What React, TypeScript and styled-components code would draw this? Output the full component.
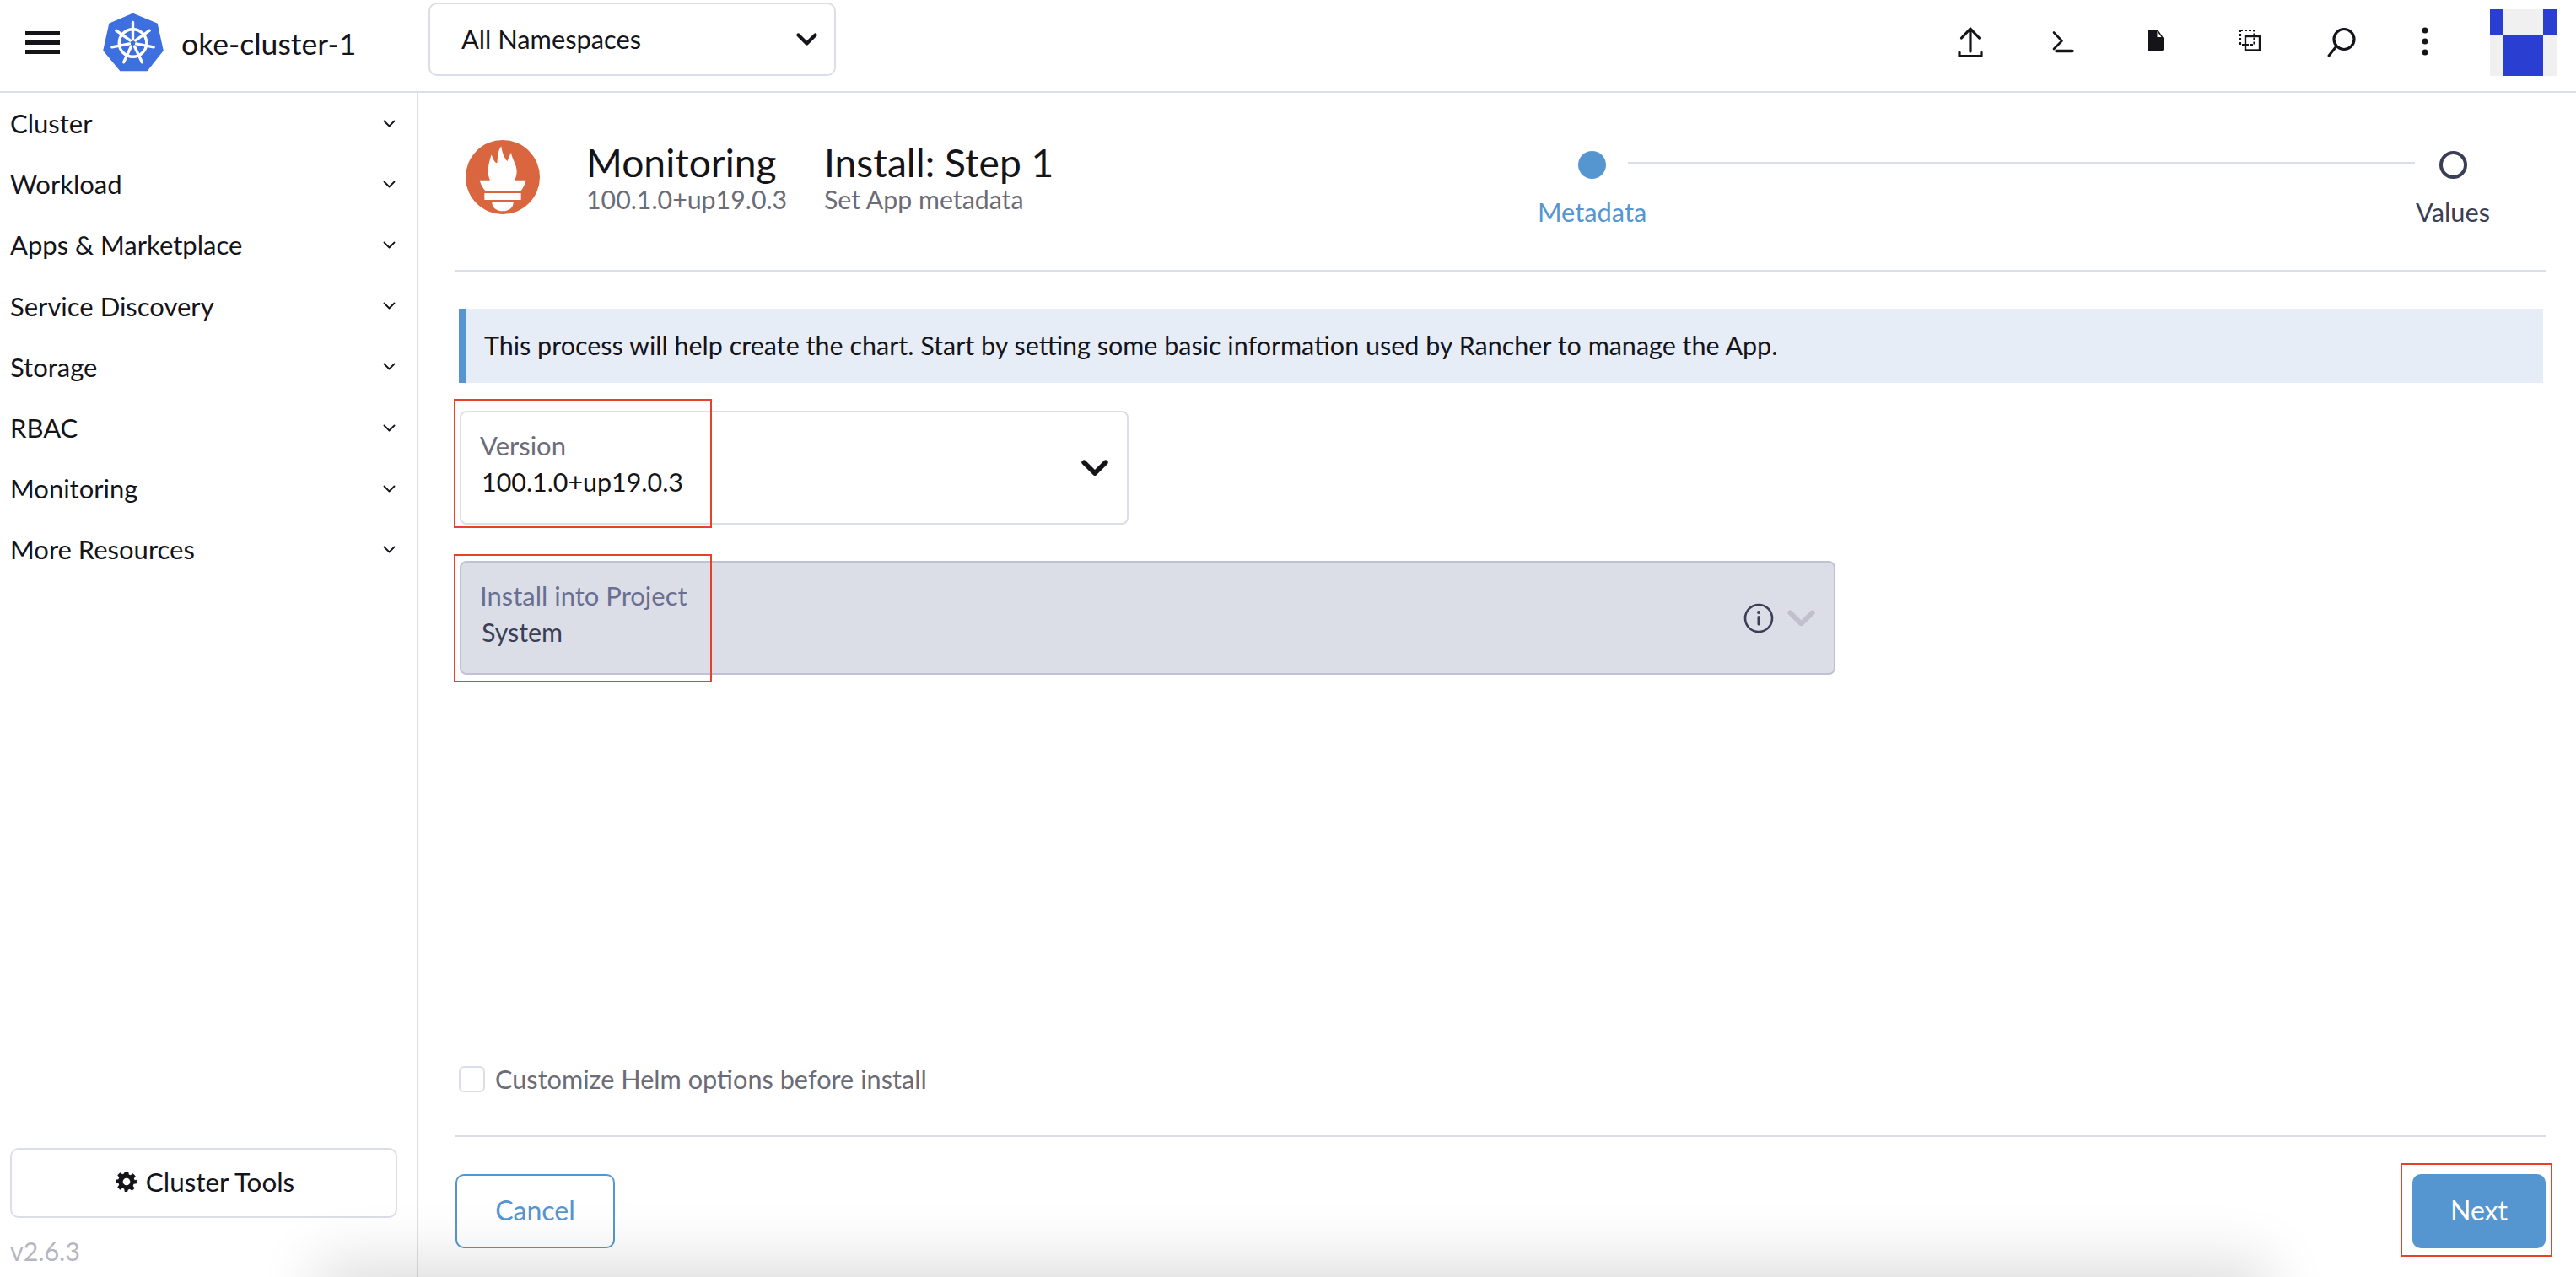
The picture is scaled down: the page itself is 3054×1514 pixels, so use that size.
import styled, { createGlobalStyle } from "styled-components";

const GlobalStyle = createGlobalStyle`
  html, body {
    margin: 0;
    padding: 0;
    background: #fff;
  }
  body {
    font-family: Lato, "Open Sans", sans-serif;
    color: #141419;
  }
  * {
    box-sizing: border-box;
  }
`;

const NAV_ITEMS = [
  "Cluster",
  "Workload",
  "Apps & Marketplace",
  "Service Discovery",
  "Storage",
  "RBAC",
  "Monitoring",
  "More Resources",
];

const Chevron = ({ size = 15, width = 2.4, color = "#141419" }: { size?: number; width?: number; color?: string }) => (
  <svg width={size} height={size * 0.6} viewBox="0 0 20 12" fill="none">
    <path d="M2 2l8 8 8-8" stroke={color} strokeWidth={width} strokeLinecap="round" strokeLinejoin="round" />
  </svg>
);

const KubeLogo = () => (
  <svg width="72" height="70" viewBox="21 14 73 70">
    <path d="M57 15L86 27L93 59L74 83H42L22 59L29 27Z" fill="#3d6fdf" stroke="#3d6fdf" strokeWidth="1.5" strokeLinejoin="round" />
    <g stroke="#fff" strokeWidth="3.4" strokeLinecap="round" fill="none">
      <circle cx="57" cy="50" r="16.5" />
      <path d="M57 25V46M77 35L60 47M82 55L61 51M68 73L59 54M46 73L55 54M32 55L53 51M37 35L54 47" />
    </g>
    <circle cx="57" cy="50" r="2.6" fill="#3d6fdf" />
  </svg>
);

const PrometheusLogo = () => (
  <svg width="88" height="88" viewBox="0 0 264 264">
    <g transform="translate(-63 -43)">
      <circle cx="195" cy="175" r="132" fill="#d9663f" />
      <path
        fill="#fff"
        d="M113 186L150 186C140 165 140 140 155 95C162 115 168 125 175 125C178 105 175 85 190 65C192 90 205 115 212 118C215 110 218 100 225 88C228 110 245 130 245 155C245 170 240 180 238 186L278 186C272 205 265 218 258 225L135 225C128 218 118 205 113 186Z"
      />
      <rect x="130" y="232" width="130" height="24" fill="#fff" />
      <path d="M157 265H233C233 285 215 296 195 296C175 296 157 285 157 265Z" fill="#fff" />
    </g>
  </svg>
);

const UploadIcon = () => (
  <svg width="48" height="48" viewBox="0 0 48 48" fill="none" stroke="#141419" strokeWidth="3.2" strokeLinecap="round" strokeLinejoin="round">
    <path d="M24 8V35M13.500 19L24 8L34.500 19M11 36V40.500H37V36" />
  </svg>
);

const ShellIcon = () => (
  <svg width="48" height="48" viewBox="0 0 48 48" fill="none" stroke="#141419" strokeLinecap="round" strokeLinejoin="round">
    <path d="M13 12.500L22.500 22.500L13 32" strokeWidth="2.6" />
    <path d="M16 34.500H35" strokeWidth="3.6" />
  </svg>
);

const FileIcon = () => (
  <svg width="48" height="48" viewBox="0 0 48 48">
    <path d="M14 10.500C14 9.700 14.700 9 15.500 9H26L33 19V32.500C33 33.300 32.300 34 31.500 34H15.500C14.700 34 14 33.300 14 32.500Z" fill="#141419" />
    <path d="M25.500 11V18H30.500Z" fill="#fff" />
  </svg>
);

const CopyIcon = () => (
  <svg width="48" height="48" viewBox="0 0 48 48" fill="none" stroke="#141419">
    <rect x="14" y="10" width="16.500" height="17" strokeWidth="2.200" strokeDasharray="3 2" />
    <rect x="20" y="17" width="17" height="16.500" strokeWidth="2.400" />
  </svg>
);

const SearchIcon = () => (
  <svg width="48" height="48" viewBox="0 0 48 48" fill="none" stroke="#141419" strokeLinecap="round">
    <circle cx="27" cy="20.500" r="12" strokeWidth="3.200" />
    <path d="M17 30L9 40" strokeWidth="3" />
  </svg>
);

const KebabIcon = () => (
  <svg width="48" height="48" viewBox="0 0 48 48" fill="#141419">
    <circle cx="24" cy="10" r="3.500" />
    <circle cx="24" cy="23" r="3.500" />
    <circle cx="24" cy="36" r="3.500" />
  </svg>
);

const GearIcon = () => (
  <svg width="26" height="26" viewBox="0 0 24 24" fill="#141419">
    <path d="M10 1h4l.6 3.100 1.900.8 2.600-1.800 2.800 2.800-1.800 2.600.8 1.900L23 10v4l-3.100.6-.8 1.900 1.800 2.600-2.800 2.800-2.600-1.800-1.900.8L13 23h-3l-.6-3.100-1.900-.8-2.600 1.800-2.800-2.800 1.800-2.600-.8-1.900L0 14v-4l3.100-.6.8-1.900-1.800-2.600 2.800-2.800 2.600 1.800 1.900-.8zM12 8a4 4 0 1 0 0 8 4 4 0 0 0 0-8z" fillRule="evenodd" />
  </svg>
);

const InfoIcon = () => (
  <svg width="36" height="36" viewBox="0 0 36 36" fill="none">
    <circle cx="18" cy="18" r="16" stroke="#3a3f55" strokeWidth="2.600" />
    <path d="M18 16.500V25" stroke="#3a3f55" strokeWidth="3" strokeLinecap="round" />
    <circle cx="18" cy="11" r="2" fill="#3a3f55" />
  </svg>
);

const App = () => {
  return (
    <Page>
      <GlobalStyle />
      <Header>
        <MenuButton>
          <span />
          <span />
          <span />
        </MenuButton>
        <KubeLogo />
        <ClusterName>oke-cluster-1</ClusterName>
        <NamespaceSelect>
          All Namespaces
          <Chevron size={25} width={3.4} />
        </NamespaceSelect>
        <HeaderActions>
          <ActionSlot><UploadIcon /></ActionSlot>
          <ActionSlot><ShellIcon /></ActionSlot>
          <ActionSlot><FileIcon /></ActionSlot>
          <ActionSlot><CopyIcon /></ActionSlot>
          <ActionSlot><SearchIcon /></ActionSlot>
          <KebabSlot><KebabIcon /></KebabSlot>
          <Avatar>
            <AvatarCell $on />
            <AvatarCell />
            <AvatarCell $on />
            <AvatarCell />
            <AvatarCell $on />
            <AvatarCell />
          </Avatar>
        </HeaderActions>
      </Header>

      <Body>
        <Sidebar>
          <NavList>
            {NAV_ITEMS.map((item) => (
              <NavItem key={item}>
                {item}
                <Chevron />
              </NavItem>
            ))}
          </NavList>
          <SidebarFooter>
            <ToolsButton>
              <GearIcon />
              Cluster Tools
            </ToolsButton>
            <VersionText>v2.6.3</VersionText>
          </SidebarFooter>
        </Sidebar>

        <Main>
          <TitleBar>
            <LogoSlot>
              <PrometheusLogo />
            </LogoSlot>
            <TitleBlock $width={282}>
              <TitleText>Monitoring</TitleText>
              <SubTitle>100.1.0+up19.0.3</SubTitle>
            </TitleBlock>
            <TitleBlock $width={300}>
              <TitleText>Install: Step 1</TitleText>
              <SubTitle>Set App metadata</SubTitle>
            </TitleBlock>
            <Stepper>
              <Step>
                <StepDot $active />
                <StepLabel $active>Metadata</StepLabel>
              </Step>
              <StepLine />
              <Step>
                <StepDot />
                <StepLabel>Values</StepLabel>
              </Step>
            </Stepper>
          </TitleBar>

          <Banner>
            This process will help create the chart. Start by setting some basic information used by Rancher to manage the App.
          </Banner>

          <Field $width={793}>
            <FieldText>
              <FieldLabel>Version</FieldLabel>
              <FieldValue>100.1.0+up19.0.3</FieldValue>
            </FieldText>
            <Chevron size={32} width={3.6} />
            <RedMark $left={-9} $top={-16} $width={306} $height={153} />
          </Field>

          <Field $width={1631} $disabled>
            <FieldText>
              <FieldLabel $disabled>Install into Project</FieldLabel>
              <FieldValue $disabled>System</FieldValue>
            </FieldText>
            <FieldIcons>
              <InfoIcon />
              <Chevron size={33} width={3.6} color="#bfc0cc" />
            </FieldIcons>
            <RedMark $left={-9} $top={-10} $width={306} $height={152} />
          </Field>

          <Spacer />

          <CheckRow>
            <CheckBox />
            Customize Helm options before install
          </CheckRow>

          <Actions>
            <CancelButton>Cancel</CancelButton>
            <NextButton>
              Next
              <RedMark $left={-14} $top={-13} $width={180} $height={111} />
            </NextButton>
          </Actions>
        </Main>
      </Body>
      <BottomShade />
    </Page>
  );
};

export default App;

const Page = styled.div`
  position: relative;
  width: 3054px;
  height: 1514px;
  overflow: hidden;
  display: flex;
  flex-direction: column;
`;

const Header = styled.header`
  height: 110px;
  flex: none;
  display: flex;
  align-items: center;
  padding: 0 23px 8px 30px;
  border-bottom: 2px solid #dcdee7;
`;

const MenuButton = styled.div`
  width: 41px;
  height: 27px;
  margin-right: 51px;
  display: flex;
  flex-direction: column;
  justify-content: space-between;

  span {
    display: block;
    height: 5px;
    background: #141419;
  }
`;

const ClusterName = styled.div`
  font-size: 35.6px;
  width: 293px;
  margin-left: 21px;
  margin-top: 2px;
`;

const NamespaceSelect = styled.div`
  width: 483px;
  height: 87px;
  margin-top: -7px;
  padding: 0 20px 0 37px;
  display: flex;
  align-items: center;
  justify-content: space-between;
  font-size: 30.8px;
  border: 2px solid #dcdee7;
  border-radius: 10px;
`;

const HeaderActions = styled.div`
  margin-left: auto;
  display: flex;
  align-items: center;
`;

const ActionSlot = styled.div`
  width: 110px;
  display: flex;
  justify-content: center;
`;

const KebabSlot = styled(ActionSlot)`
  width: 88px;
`;

const Avatar = styled.div`
  width: 79px;
  height: 79px;
  margin-left: 33px;
  display: grid;
  grid-template-columns: 16px 47px 16px;
  grid-template-rows: 31px 48px;
`;

const AvatarCell = styled.div<{ $on?: boolean }>`
  background: ${(p) => (p.$on ? "#2a3fd1" : "#f0f0f0")};
`;

const Body = styled.div`
  flex: 1;
  min-height: 0;
  display: flex;
`;

const Sidebar = styled.aside`
  width: 496px;
  flex: none;
  display: flex;
  flex-direction: column;
  justify-content: space-between;
  padding: 0 25px 0 12px;
  border-right: 2px solid #dcdee7;
`;

const NavList = styled.nav`
  display: flex;
  flex-direction: column;
`;

const NavItem = styled.div`
  height: 72.2px;
  display: flex;
  align-items: center;
  justify-content: space-between;
  font-size: 31px;
`;

const SidebarFooter = styled.div`
  display: flex;
  flex-direction: column;
`;

const ToolsButton = styled.div`
  width: 459px;
  height: 83px;
  padding: 0 0 3px 3px;
  display: flex;
  align-items: center;
  justify-content: center;
  gap: 10px;
  font-size: 31.4px;
  border: 2px solid #dcdee7;
  border-radius: 10px;
`;

const VersionText = styled.div`
  height: 70px;
  padding-top: 21px;
  font-size: 30.4px;
  line-height: 36px;
  color: #b6b6c2;
`;

const Main = styled.main`
  flex: 1;
  min-width: 0;
  display: flex;
  flex-direction: column;
  padding: 0 36px 34px 44px;
`;

const TitleBar = styled.div`
  height: 212px;
  flex: none;
  display: flex;
  align-items: flex-start;
  padding-top: 55px;
  border-bottom: 2px solid #dcdee7;
`;

const LogoSlot = styled.div`
  width: 155px;
  padding: 1px 0 0 12px;
`;

const TitleBlock = styled.div<{ $width: number }>`
  width: ${(p) => p.$width}px;
`;

const TitleText = styled.div`
  font-size: 46.2px;
  line-height: 54px;
`;

const SubTitle = styled.div`
  font-size: 30.3px;
  line-height: 32px;
  margin-top: 1px;
  color: #6c6c76;
`;

const Stepper = styled.div`
  width: 1129px;
  margin: 14px 66px 0 auto;
  display: flex;
  align-items: flex-start;
`;

const Step = styled.div`
  display: flex;
  flex-direction: column;
  align-items: center;
  gap: 22px;
`;

const StepDot = styled.div<{ $active?: boolean }>`
  width: 33px;
  height: 33px;
  border-radius: 50%;
  background: ${(p) => (p.$active ? "#5696d0" : "#fff")};
  border: ${(p) => (p.$active ? "none" : "4px solid #3a3f55")};
`;

const StepLabel = styled.div<{ $active?: boolean }>`
  font-size: 30.8px;
  line-height: 36px;
  color: ${(p) => (p.$active ? "#5696d0" : "#3a3f55")};
`;

const StepLine = styled.div`
  flex: 1;
  height: 3px;
  margin: 13px 1px 0 -22px;
  background: #dcdee7;
`;

const Banner = styled.div`
  margin-top: 44px;
  margin-left: 4px;
  margin-right: 3px;
  height: 88px;
  padding: 0 0 2px 22px;
  display: flex;
  align-items: center;
  font-size: 30.5px;
  background: #e6edf7;
  border-left: 8px solid #5696d0;
`;

const Field = styled.div<{ $width: number; $disabled?: boolean }>`
  position: relative;
  width: ${(p) => p.$width}px;
  height: 135px;
  margin: 33px 0 0 5px;
  padding: 0 22px 0 22px;
  display: flex;
  align-items: center;
  justify-content: space-between;
  border-radius: 8px;
  border: 2px solid ${(p) => (p.$disabled ? "#bfc2d3" : "#dcdee7")};
  background: ${(p) => (p.$disabled ? "#dcdee7" : "#fff")};

  & + & {
    margin-top: 43px;
  }
`;

const FieldText = styled.div`
  display: flex;
  flex-direction: column;
  margin-top: -10px;
`;

const FieldLabel = styled.div<{ $disabled?: boolean }>`
  font-size: 31px;
  line-height: 43px;
  color: ${(p) => (p.$disabled ? "#6a6f92" : "#6c6c76")};
`;

const FieldValue = styled.div<{ $disabled?: boolean }>`
  font-size: 30.4px;
  line-height: 43px;
  margin-left: 2px;
  color: ${(p) => (p.$disabled ? "#3a3f55" : "#141419")};
`;

const FieldIcons = styled.div`
  display: flex;
  align-items: center;
  gap: 16px;
`;

const RedMark = styled.div<{ $left: number; $top: number; $width: number; $height: number }>`
  position: absolute;
  left: ${(p) => p.$left}px;
  top: ${(p) => p.$top}px;
  width: ${(p) => p.$width}px;
  height: ${(p) => p.$height}px;
  border: 2px solid #e8412a;
`;

const Spacer = styled.div`
  flex: 1;
`;

const CheckRow = styled.div`
  display: flex;
  align-items: center;
  gap: 12px;
  margin-left: 4px;
  height: 32px;
  padding-bottom: 2px;
  font-size: 30.7px;
  color: #6c6c76;
`;

const CheckBox = styled.div`
  width: 31px;
  height: 31px;
  flex: none;
  border: 2px solid #dcdee7;
  border-radius: 6px;
`;

const Actions = styled.div`
  margin-top: 50px;
  padding-top: 44px;
  border-top: 2px solid #dcdee7;
  display: flex;
  justify-content: space-between;
`;

const CancelButton = styled.div`
  width: 189px;
  height: 88px;
  padding-bottom: 3px;
  display: flex;
  align-items: center;
  justify-content: center;
  font-size: 32px;
  color: #5696d0;
  border: 2px solid #5696d0;
  border-radius: 10px;
`;

const NextButton = styled.div`
  position: relative;
  width: 158px;
  height: 88px;
  padding-bottom: 3px;
  display: flex;
  align-items: center;
  justify-content: center;
  font-size: 32px;
  color: #fff;
  background: #5696d0;
  border-radius: 10px;
`;

const BottomShade = styled.div`
  position: absolute;
  left: 395px;
  right: 384px;
  bottom: -60px;
  height: 60px;
  box-shadow: 0 0 70px 20px rgba(0, 0, 0, 0.13);
  pointer-events: none;
`;
